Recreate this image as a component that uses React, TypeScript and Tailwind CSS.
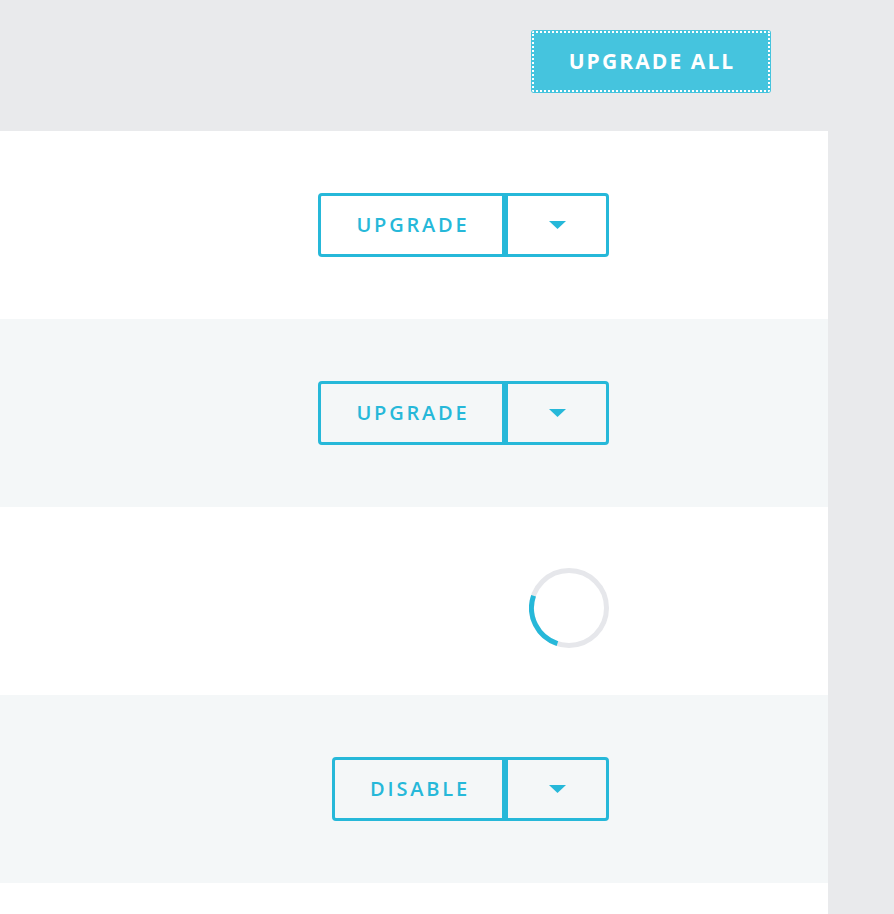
import React from "react";

const font = { fontFamily: '"Open Sans", "Liberation Sans", sans-serif' };

function Caret() {
  return (
    <svg width="17" height="8" viewBox="0 0 17 8" aria-hidden="true">
      <polygon points="0,0 17,0 8.5,8" fill="#26b8d9" />
    </svg>
  );
}

function SplitButton({ label, width }: { label: string; width: string }) {
  return (
    <div className="flex h-[64px]">
      <button
        className={`${width} h-full flex items-center justify-center pl-[3px] border-[3px] border-[#26b8d9] rounded-l-[4px] text-[#26b8d9] text-[20px] font-semibold tracking-[0.14em] bg-transparent`}
        style={font}
      >
        {label}
      </button>
      <button className="w-[104px] h-full flex items-center justify-center border-[3px] border-[#26b8d9] rounded-r-[4px] bg-transparent">
        <Caret />
      </button>
    </div>
  );
}

function Spinner() {
  return (
    <svg width="80" height="80" viewBox="0 0 80 80" aria-hidden="true">
      <circle cx="40" cy="40" r="37.5" fill="none" stroke="#e6e7eb" strokeWidth="5" />
      <path
        d="M28.41 75.66 A37.5 37.5 0 0 1 4.54 27.79"
        fill="none"
        stroke="#26b8d9"
        strokeWidth="5"
      />
    </svg>
  );
}

export default function App() {
  return (
    <div className="w-[894px] h-[914px] overflow-hidden bg-[#e9eaec]" style={font}>
      <div className="h-[131px] flex justify-end items-start pt-[30px] pr-[123px]">
        <button
          className="w-[240px] h-[63px] rounded-[3px] bg-[#45c4de] text-white text-[21px] font-bold tracking-[0.1em] pl-[2px] pt-[1px] outline-2 outline-dotted outline-white -outline-offset-3 flex items-center justify-center"
          style={font}
        >
          UPGRADE ALL
        </button>
      </div>
      <div className="w-[828px]">
        <div className="h-[188px] bg-white flex items-center justify-end pr-[219px]">
          <SplitButton label="UPGRADE" width="w-[187px]" />
        </div>
        <div className="h-[188px] bg-[#f4f7f8] flex items-center justify-end pr-[219px]">
          <SplitButton label="UPGRADE" width="w-[187px]" />
        </div>
        <div className="h-[188px] bg-white flex items-start justify-end pr-[219px] pt-[61px]">
          <Spinner />
        </div>
        <div className="h-[188px] bg-[#f4f7f8] flex items-center justify-end pr-[219px]">
          <SplitButton label="DISABLE" width="w-[173px]" />
        </div>
        <div className="h-[100px] bg-white" />
      </div>
    </div>
  );
}
